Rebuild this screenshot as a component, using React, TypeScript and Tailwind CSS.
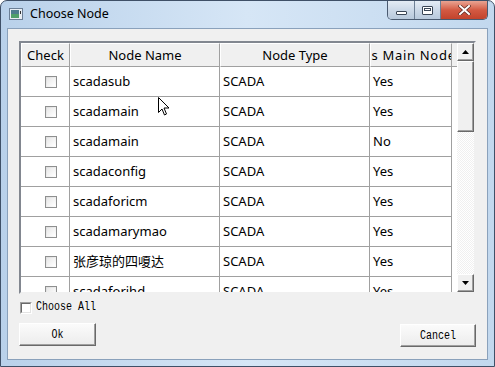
import React from 'react';

const rows = [
  { name: 'scadasub', type: 'SCADA', main: 'Yes' },
  { name: 'scadamain', type: 'SCADA', main: 'Yes' },
  { name: 'scadamain', type: 'SCADA', main: 'No' },
  { name: 'scadaconfig', type: 'SCADA', main: 'Yes' },
  { name: 'scadaforicm', type: 'SCADA', main: 'Yes' },
  { name: 'scadamarymao', type: 'SCADA', main: 'Yes' },
  { name: '张彦琼的四嗄达', type: 'SCADA', main: 'Yes' },
  { name: 'scadaforihd', type: 'SCADA', main: 'Yes' },
];

const CheckBox: React.FC = () => (
  <div className="h-[12px] w-[12px] border border-[#8e8f8f] bg-gradient-to-br from-[#dcdcdc] to-white p-[1px]">
    <div className="h-full w-full bg-gradient-to-br from-[#e8e8e8] to-white" />
  </div>
);

const ArrowBtn: React.FC<{ up?: boolean }> = ({ up }) => (
  <div className="flex h-[18px] w-full items-center justify-center border border-t-white border-l-white border-r-[#696969] border-b-[#696969] bg-[#f0f0f0] shadow-[inset_-1px_-1px_0_#a0a0a0]">
    <svg width="7" height="4" viewBox="0 0 7 4">
      {up ? <path d="M3.5 0 L7 4 L0 4 Z" fill="#000" /> : <path d="M0 0 L7 0 L3.5 4 Z" fill="#000" />}
    </svg>
  </div>
);

const mono = { fontFamily: '"Liberation Mono", monospace' };

export default function App() {
  return (
    <div
      className="relative flex h-[367px] w-[495px] flex-col overflow-hidden rounded-t-[7px] border border-[#3f5067] bg-gradient-to-r from-[#b9d1ea] via-[#d6e6f6] to-[#c2d8ee]"
      style={{ fontFamily: '"Noto Sans", "Noto Sans CJK SC", sans-serif' }}
    >
      {/* title bar */}
      <div className="flex h-[27px] shrink-0 items-start">
        <svg className="ml-[8px] mt-[7px]" width="14" height="12" viewBox="0 0 14 12">
          <rect x="0.5" y="0.5" width="13" height="11" fill="#e8eef4" stroke="#6b7f96" />
          <rect x="2" y="2" width="8" height="8" fill="#4d7d8e" />
          <rect x="2" y="6" width="8" height="4" fill="#4fa06a" />
          <rect x="11" y="3" width="1" height="3" fill="#333" />
        </svg>
        <span className="ml-[7px] mt-[5px] text-[12.5px] leading-[16px] text-black">Choose Node</span>
        <div className="ml-auto mr-[6px] flex h-[19px] overflow-hidden rounded-b-[5px] border border-t-0 border-[#4a5a70]">
          <div className="flex w-[27px] items-center justify-center border-r border-[#6d7f95] bg-gradient-to-b from-[#e4ecf5] via-[#ccd9e8] to-[#b8c9dc]">
            <div className="mt-[5px] h-[4px] w-[11px] rounded-[1px] border border-[#3a4656] bg-white" />
          </div>
          <div className="flex w-[26px] items-center justify-center border-r border-[#6d7f95] bg-gradient-to-b from-[#e4ecf5] via-[#ccd9e8] to-[#b8c9dc]">
            <div className="h-[9px] w-[11px] rounded-[1px] border border-[#3a4656] bg-white p-[1px]">
              <div className="h-[3px] w-full border border-[#3a4656]" />
            </div>
          </div>
          <div className="flex w-[46px] items-center justify-center bg-gradient-to-b from-[#e8a493] via-[#d35a43] to-[#c2432c]">
            <svg width="13" height="10" viewBox="0 0 13 10">
              <path d="M2 1 L11 9 M11 1 L2 9" stroke="#5a2a22" strokeWidth="3.4" strokeLinecap="square" />
              <path d="M2 1 L11 9 M11 1 L2 9" stroke="#fff" strokeWidth="2" strokeLinecap="square" />
            </svg>
          </div>
        </div>
      </div>

      {/* client area */}
      <div className="mx-[6px] h-[332px] shrink-0 border border-[#8aa1bb] bg-[#f0f0f0]">
        {/* table */}
        <div className="ml-[11px] mt-[12px] flex h-[253px] w-[457px] border-2 border-t-[#828790] border-l-[#828790] border-r-[#f0f0f0] border-b-[#f0f0f0] bg-white">
          <div className="relative flex flex-1 flex-col overflow-hidden">
            <div className="flex h-[24px] shrink-0 bg-[#f0f0f0] text-[13px] text-black">
              {[
                ['Check', 'w-[49px]', ''],
                ['Node Name', 'w-[150px]', ''],
                ['Node Type', 'w-[150px]', ''],
                ['Is Main Node', 'w-[82px]', 'tracking-[0.7px]'],
              ].map(([t, w, tr]) => (
                <div
                  key={t}
                  className={`${w} flex shrink-0 items-center justify-center overflow-hidden whitespace-nowrap border-r border-b border-[#a0a0a0] border-l border-l-white border-t border-t-white pt-[1px]`}
                >
                  <span className={`w-max shrink-0 ${tr}`}>{t}</span>
                </div>
              ))}
              <div className="flex-1 border-b border-[#a0a0a0]" />
            </div>
            <div className="flex flex-col text-[13px] text-black">
              {rows.map((r, i) => (
                <div key={i} className="flex h-[30px] shrink-0">
                  <div className="flex w-[49px] shrink-0 items-center border-r border-b border-[#a0a0a0] pl-[24px]">
                    <CheckBox />
                  </div>
                  <div className="flex w-[150px] shrink-0 items-center border-r border-b border-[#a0a0a0] pl-[3px] pt-[1px]">{r.name}</div>
                  <div className="flex w-[150px] shrink-0 items-center border-r border-b border-[#a0a0a0] pl-[3px] pt-[1px]">{r.type}</div>
                  <div className="flex w-[82px] shrink-0 items-center border-r border-b border-[#a0a0a0] pl-[3px] pt-[1px]">{r.main}</div>
                </div>
              ))}
            </div>
            {/* mouse cursor */}
            <svg className="absolute left-[137px] top-[54px]" width="12" height="19" viewBox="0 0 12 19">
              <path d="M0.5 0.5 L0.5 15.5 L4 12 L6.5 18 L8.5 17 L6 11 L11 11 Z" fill="#fff" stroke="#000" strokeWidth="1" />
            </svg>
          </div>
          {/* scrollbar */}
          <div className="flex w-[17px] shrink-0 flex-col">
            <ArrowBtn up />
            <div className="h-[71px] w-full shrink-0 border border-t-white border-l-white border-r-[#696969] border-b-[#696969] bg-[#f0f0f0] shadow-[inset_-1px_-1px_0_#a0a0a0]" />
            <div className="flex-1 bg-[repeating-conic-gradient(#f0f0f0_0_25%,#ffffff_0_50%)] bg-[length:2px_2px]" />
            <ArrowBtn />
          </div>
        </div>

        {/* choose all */}
        <div className="ml-[12px] mt-[8px] flex items-center">
          <div className="h-[12px] w-[12px] border border-t-[#a0a0a0] border-l-[#a0a0a0] border-r-white border-b-white">
            <div className="h-full w-full border border-t-[#696969] border-l-[#696969] border-r-[#e3e3e3] border-b-[#e3e3e3] bg-white" />
          </div>
          <span className="ml-[4px] scale-y-[1.2] text-[10px] leading-[12px] text-black" style={mono}>
            Choose All
          </span>
        </div>

        {/* buttons */}
        <div className="mt-[9px] flex items-start justify-between pl-[11px] pr-[11px]">
          {['Ok', 'Cancel'].map((t, i) => (
            <div
              key={t}
              className={`${i === 0 ? 'w-[77px]' : 'mt-[1px] w-[76px]'} flex h-[23px] items-center justify-center border border-t-white border-l-white border-r-[#696969] border-b-[#696969] bg-gradient-to-b from-[#fbfbfb] to-[#ececec] shadow-[inset_-1px_-1px_0_#a0a0a0] text-black`}
            >
              <span className="scale-y-[1.2] text-[10px]" style={mono}>{t}</span>
            </div>
          ))}
        </div>
      </div>
    </div>
  );
}
